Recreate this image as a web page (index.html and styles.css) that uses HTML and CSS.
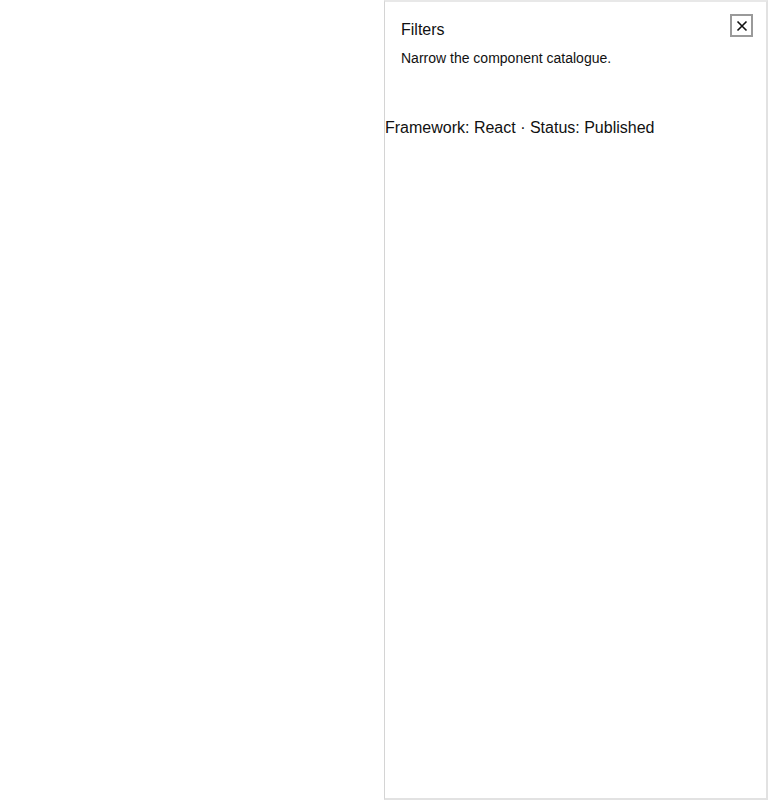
FILE: index.html
```html
<!DOCTYPE html>
<html>
<head>
<meta charset="utf-8">
<link rel="stylesheet" href="styles.css">
</head>
<body>
<div class="page">
  <aside class="drawer">
    <div class="drawer-head">
      <div class="titles">
        <h2 class="title">Filters</h2>
        <p class="subtitle">Narrow the component catalogue.</p>
      </div>
      <button class="close" aria-label="Close">
        <svg width="12" height="12" viewBox="0 0 12 12"><path d="M1.5 1.5 L10.5 10.5 M10.5 1.5 L1.5 10.5" stroke="#111" stroke-width="1.6" fill="none"/></svg>
      </button>
    </div>
    <p class="summary">Framework: React · Status: Published</p>
  </aside>
</div>
</body>
</html>
```
FILE: styles.css
```css
html, body {
  margin: 0;
  padding: 0;
  background: #fff;
  font-family: "Liberation Sans", Arial, sans-serif;
  color: #111;
}
.page {
  display: flex;
  justify-content: flex-end;
  width: 768px;
  height: 800px;
}
.drawer {
  box-sizing: border-box;
  width: 384px;
  height: 800px;
  border: 1px solid #d4d4d4;
  border-right: 2px solid #e2e2e2;
  border-bottom: 2px solid #e2e2e2;
  border-top: 2px solid #e8e8e8;
}
.drawer-head {
  display: flex;
  justify-content: space-between;
  align-items: flex-start;
  padding: 13px 12px 0 16px;
}
.titles {
  padding-top: 5px;
}
.title {
  margin: 0;
  font-size: 16px;
  font-weight: normal;
  line-height: 19px;
}
.subtitle {
  margin: 11px 0 0;
  font-size: 14px;
  line-height: 16px;
}
.close {
  box-sizing: border-box;
  width: 23px;
  height: 23px;
  padding: 0;
  margin: -1px 1px 0 0;
  border: 2px solid #9a9a9a;
  background: #fff;
  display: flex;
  align-items: center;
  justify-content: center;
}
.summary {
  margin: 52px 0 0;
  font-size: 16px;
  line-height: 19px;
}
```
